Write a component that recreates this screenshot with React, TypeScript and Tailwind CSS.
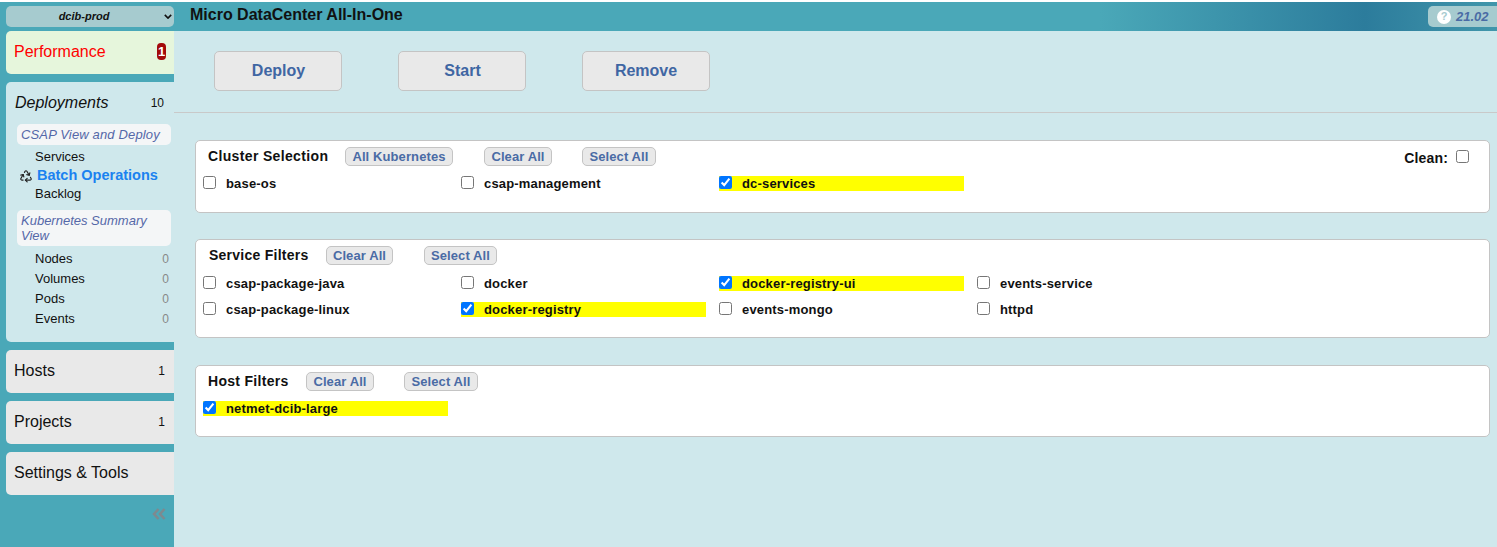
import React from "react";
import { Recycle } from "lucide-react";

const font = { fontFamily: '"Liberation Sans", Arial, sans-serif' };

function Check({ label, checked }: { label: string; checked?: boolean }) {
  return (
    <label className={`flex h-[15px] w-[245px] items-center ${checked ? "bg-[#ffff00]" : ""}`}>
      <input type="checkbox" checked={!!checked} readOnly className="m-0 h-[13px] w-[13px] shrink-0 self-start" />
      <span className="ml-[10px] text-[13px] leading-[15px] font-bold tracking-[0.17px] text-[#111]">{label}</span>
    </label>
  );
}

function SmallBtn({ children, w }: { children: React.ReactNode; w: string }) {
  return (
    <button className={`${w} flex h-[19px] items-center justify-center rounded-[5px] border border-[#c4c4c4] bg-[#e9e9e9] text-[13px] font-bold tracking-[0.1px] text-[#4a6ba5]`}>
      {children}
    </button>
  );
}

function BigBtn({ children }: { children: React.ReactNode }) {
  return (
    <button className="flex h-[40px] w-[128px] items-center justify-center rounded-[5px] border border-[#c4c4c4] bg-[#e9e9e9] text-[16px] font-bold text-[#3f66a3]">
      {children}
    </button>
  );
}

function NavCard({ label, count }: { label: string; count?: string }) {
  return (
    <div className="flex h-[43px] items-center justify-between rounded-l-[5px] bg-[#e9e9e9] pr-[9px] pb-[2px] pl-[8px]">
      <span className="text-[16px] text-[#111]">{label}</span>
      {count && <span className="text-[12px] text-[#111]">{count}</span>}
    </div>
  );
}

function SubItem({ label }: { label: string }) {
  return (
    <div className="flex h-[20px] items-center justify-between pr-[4px] pl-[20px] text-[13px] text-[#111]">
      <span>{label}</span>
      <span className="text-[12px] text-[#888]">0</span>
    </div>
  );
}

export default function App() {
  return (
    <div style={font} className="flex h-[547px] w-[1497px] flex-col overflow-hidden bg-white">
      <div className="mt-[2px] flex min-h-0 flex-1">
        <aside className="flex w-[174px] shrink-0 flex-col bg-[#4aa8b8] pt-[4px] pl-[6px]">
          <div className="relative flex h-[21px] items-center justify-center rounded-[5px] bg-[#a6cbcf] pr-[12px] text-[11px] font-bold text-[#111] italic">
            dcib-prod
            <svg viewBox="0 0 10 6" className="absolute top-[8px] right-[2px] h-[5px] w-[8px]" fill="none" stroke="#111" strokeWidth="2">
              <path d="M1 1l4 4 4-4" />
            </svg>
          </div>
          <div className="mt-[4px] flex h-[43px] items-center justify-between rounded-l-[5px] bg-[#e6f6dc] pr-[8px] pb-[2px] pl-[8px]">
            <span className="text-[16px] text-[#ff0000]">Performance</span>
            <span className="flex h-[17px] w-[9px] items-center justify-center rounded-[4px] bg-[#a30a0a] text-[13px] font-bold text-white">1</span>
          </div>
          <div className="mt-[8px] h-[260px] rounded-l-[5px] bg-[#cfe8ec] pt-[11px] pl-[9px]">
            <div className="flex h-[19px] items-center justify-between pr-[10px]">
              <span className="text-[16px] text-[#111] italic">Deployments</span>
              <span className="text-[12px] text-[#111]">10</span>
            </div>
            <div className="mt-[12px] ml-[2px] flex h-[21px] w-[154px] items-center rounded-[5px] bg-[#f4f6f7] pl-[4px] text-[13px] tracking-[0.15px] text-[#5468a8] italic">
              CSAP View and Deploy
            </div>
            <div className="mt-[3px] ml-[20px] h-[17px] text-[13px] leading-[17px] text-[#111]">Services</div>
            <div className="ml-[4px] flex h-[19px] items-center gap-[4px] pt-[2px]">
              <Recycle className="h-[14px] w-[14px] shrink-0 text-[#222]" strokeWidth={2} />
              <span className="text-[14.5px] font-bold text-[#1a82f0]">Batch Operations</span>
            </div>
            <div className="ml-[20px] h-[17px] pt-[1px] text-[13px] leading-[17px] text-[#111]">Backlog</div>
            <div className="mt-[9px] ml-[2px] h-[36px] w-[154px] rounded-[5px] bg-[#f4f6f7] pt-[3px] pl-[4px] text-[13px] leading-[15px] text-[#5468a8] italic">
              Kubernetes Summary View
            </div>
            <div className="mt-[3px] w-[158px]">
              <SubItem label="Nodes" />
              <SubItem label="Volumes" />
              <SubItem label="Pods" />
              <SubItem label="Events" />
            </div>
          </div>
          <div className="mt-[8px] flex flex-col gap-[8px]">
            <NavCard label="Hosts" count="1" />
            <NavCard label="Projects" count="1" />
            <NavCard label="Settings & Tools" />
          </div>
          <svg viewBox="0 0 14 12" className="mt-[13px] mr-[8px] h-[12px] w-[14px] self-end" fill="none" stroke="#7d8a8f" strokeWidth="2.6">
            <path d="M6.5 1L2 6l4.500 5M12.500 1L8 6l4.500 5" />
          </svg>
        </aside>
        <div className="flex min-w-0 flex-1 flex-col bg-[#cfe8ec]">
          <header className="flex h-[29px] shrink-0 items-start justify-between bg-[linear-gradient(90deg,#4aa8b8_0%,#4aa8b8_70%,#2c7c9c_90%,#4196ab_100%)] pl-[16px]">
            <span className="mt-[4px] text-[16px] leading-[18px] font-bold text-[#111]">Micro DataCenter All-In-One</span>
            <div className="mt-[4px] flex h-[21px] w-[69px] items-center rounded-l-[5px] bg-[#a6cbcf] pl-[9px]">
              <span className="flex h-[14px] w-[14px] items-center justify-center rounded-full bg-white text-[11px] font-bold text-[#a6cbcf]">?</span>
              <span className="ml-[5px] text-[13px] font-bold text-[#4a6ba5] italic">21.02</span>
            </div>
          </header>
          <div className="flex gap-[56px] pt-[20px] pl-[40px]">
            <BigBtn><span className="pl-px">Deploy</span></BigBtn>
            <BigBtn><span className="pl-px">Start</span></BigBtn>
            <BigBtn>Remove</BigBtn>
          </div>
          <hr className="mt-[21px] border-t border-[#c9c9c9]" />

          <section className="relative mt-[27px] ml-[21px] h-[73px] w-[1295px] rounded-[5px] border border-[#c4c4c4] bg-white">
            <div className="mt-[6px] flex h-[19px] items-center pl-[12px]">
              <span className="w-[137px] text-[14px] font-bold tracking-[0.35px] text-[#111]">Cluster Selection</span>
              <SmallBtn w="w-[108px]">All Kubernetes</SmallBtn>
              <div className="ml-[31px]"><SmallBtn w="w-[68px]">Clear All</SmallBtn></div>
              <div className="ml-[30px]"><SmallBtn w="w-[74px]">Select All</SmallBtn></div>
            </div>
            <div className="absolute top-[9px] right-[20px] flex items-start gap-[8px]">
              <span className="text-[14px] leading-[16px] font-bold tracking-[0.15px] text-[#111]">Clean:</span>
              <input type="checkbox" readOnly checked={false} className="m-0 h-[13px] w-[13px]" />
            </div>
            <div className="mt-[10px] grid grid-cols-[258px_258px_258px_258px] pl-[7px]">
              <Check label="base-os" />
              <Check label="csap-management" />
              <Check label="dc-services" checked />
            </div>
          </section>

          <section className="mt-[26px] ml-[21px] h-[99px] w-[1295px] rounded-[5px] border border-[#c4c4c4] bg-white">
            <div className="mt-[6px] flex h-[19px] items-center pl-[13px]">
              <span className="w-[117px] text-[14px] font-bold tracking-[0.25px] text-[#111]">Service Filters</span>
              <SmallBtn w="w-[67px]">Clear All</SmallBtn>
              <div className="ml-[31px]"><SmallBtn w="w-[73px]">Select All</SmallBtn></div>
            </div>
            <div className="mt-[11px] grid grid-cols-[258px_258px_258px_258px] gap-y-[11px] pl-[7px]">
              <Check label="csap-package-java" />
              <Check label="docker" />
              <Check label="docker-registry-ui" checked />
              <Check label="events-service" />
              <Check label="csap-package-linux" />
              <Check label="docker-registry" checked />
              <Check label="events-mongo" />
              <Check label="httpd" />
            </div>
          </section>

          <section className="mt-[27px] ml-[21px] h-[72px] w-[1295px] rounded-[5px] border border-[#c4c4c4] bg-white">
            <div className="mt-[6px] flex h-[19px] items-center pl-[12px]">
              <span className="w-[98px] text-[14px] font-bold tracking-[0.3px] text-[#111]">Host Filters</span>
              <SmallBtn w="w-[68px]">Clear All</SmallBtn>
              <div className="ml-[30px]"><SmallBtn w="w-[74px]">Select All</SmallBtn></div>
            </div>
            <div className="mt-[10px] pl-[7px]">
              <Check label="netmet-dcib-large" checked />
            </div>
          </section>
        </div>
      </div>
    </div>
  );
}
